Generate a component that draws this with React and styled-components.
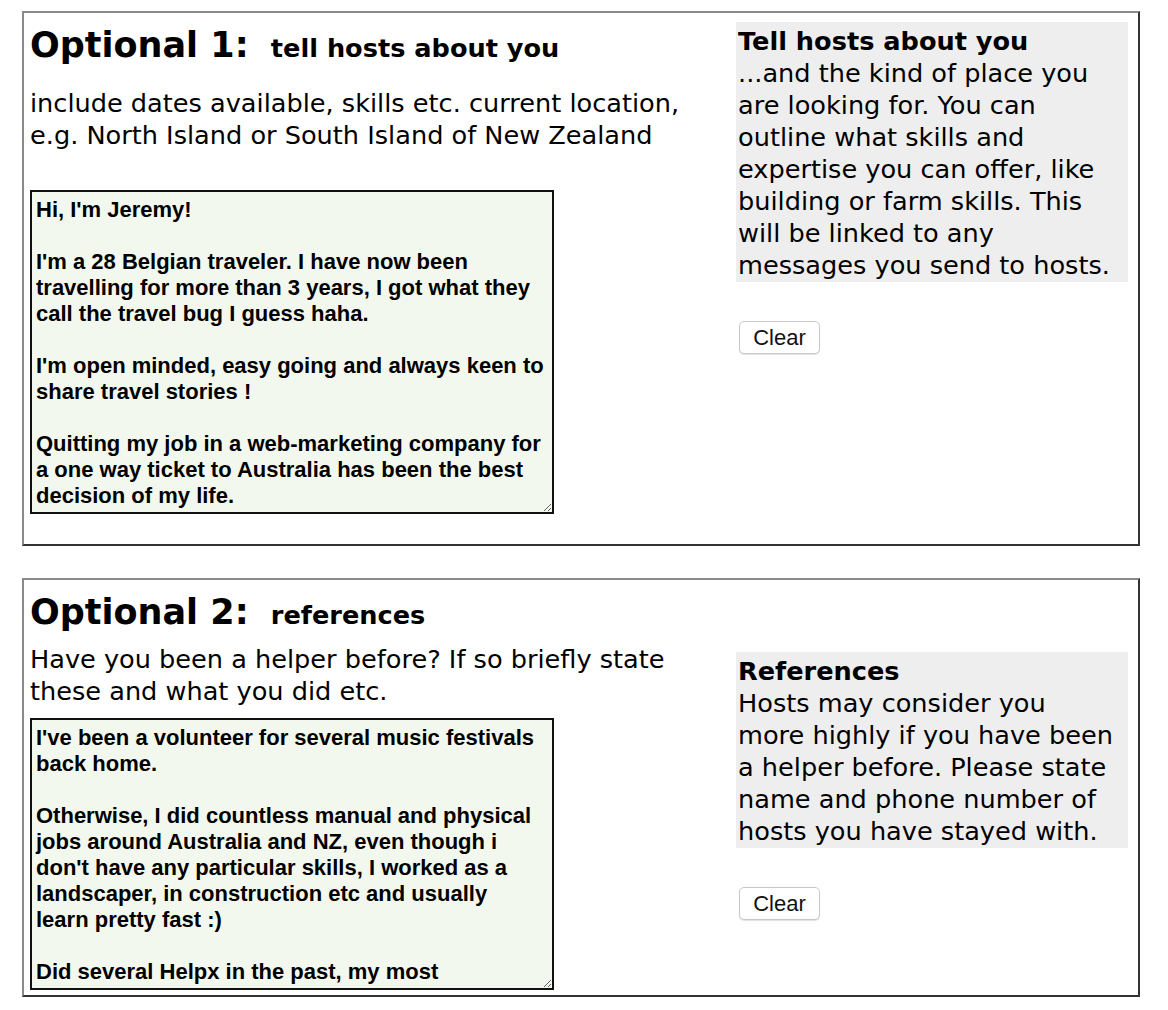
import React from "react";
import styled, {createGlobalStyle} from "styled-components";

const GlobalStyle = createGlobalStyle`
  body {
    margin: 0;
    background: #fff;
    color: #000;
    font-family: "DejaVu Sans", Verdana, sans-serif;
  }
`;

const Page = styled.div`
  display: flex;
  flex-direction: column;
  gap: 32px;
  padding: 11px 28px 13px 22px;
`;

const Section = styled.div`
  display: grid;
  grid-template-columns: 690px 392px;
  column-gap: 16px;
  align-items: start;
  border: 2px solid;
  border-color: #8a8a8a #333 #333 #8a8a8a;
  padding: 9px 10px ${p => p.$bottom}px 6px;
`;

const Main = styled.div`
  display: flex;
  flex-direction: column;
`;

const Title = styled.h2`
  margin: 2px 0 0;
  font-size: 35px;
  line-height: 42px;
  font-weight: bold;
`;

const TitleSub = styled.span`
  margin-left: 10px;
  font-size: 25.6px;
`;

const Hint = styled.p`
  margin: ${p => p.$top}px 0 ${p => p.$bottom}px;
  font-size: 25.6px;
  line-height: 32px;
`;

const Notes = styled.textarea`
  box-sizing: border-box;
  width: 524px;
  height: ${p => p.$height}px;
  margin: 0;
  padding: 5px 7px 5px 4px;
  border: 2px solid #111;
  border-radius: 0;
  background: #f3f8ee;
  color: #000;
  font-family: "Liberation Sans", Arial, sans-serif;
  font-size: 22px;
  font-weight: bold;
  line-height: 26px;
  overflow: hidden;
  outline: none;
`;

const Aside = styled.div`
  display: flex;
  flex-direction: column;
  align-items: flex-start;
  padding-top: ${p => p.$offset}px;
`;

const Tip = styled.div`
  box-sizing: border-box;
  width: 100%;
  padding: 3px 2px 1px;
  background: #eee;
  font-size: 25.6px;
  line-height: 32px;
`;

const TipTitle = styled.div`
  font-weight: bold;
`;

const ClearButton = styled.button`
  margin: 39px 0 0 3px;
  width: 81px;
  height: 33px;
  padding: 0;
  border: 1px solid #c9c9c9;
  border-radius: 5px;
  background: #fff;
  box-shadow: 0 1px 1px rgba(0, 0, 0, 0.12);
  color: #111;
  font-family: "Liberation Sans", Arial, sans-serif;
  font-size: 22px;
`;

const about = `Hi, I'm Jeremy!

I'm a 28 Belgian traveler. I have now been travelling for more than 3 years, I got what they call the travel bug I guess haha.

I'm open minded, easy going and always keen to share travel stories !

Quitting my job in a web-marketing company for a one way ticket to Australia has been the best decision of my life.`;

const refs = `I've been a volunteer for several music festivals back home.

Otherwise, I did countless manual and physical jobs around Australia and NZ, even though i don't have any particular skills, I worked as a landscaper, in construction etc and usually learn pretty fast :)

Did several Helpx in the past, my most`;

export default function App() {
    return <>
        <GlobalStyle/>
        <Page>
            <Section $bottom={30}>
                <Main>
                    <Title>Optional 1: <TitleSub>tell hosts about you</TitleSub></Title>
                    <Hint $top={18} $bottom={39}>
                        include dates available, skills etc. current location, e.g. North Island or South Island of New Zealand
                    </Hint>
                    <Notes $height={324} defaultValue={about} spellCheck={false}/>
                </Main>
                <Aside $offset={0}>
                    <Tip>
                        <TipTitle>Tell hosts about you</TipTitle>
                        ...and the kind of place you are looking for. You can outline what skills and expertise you can offer, like building or farm skills. This will be linked to any messages you send to hosts.
                    </Tip>
                    <ClearButton type="button">Clear</ClearButton>
                </Aside>
            </Section>

            <Section $bottom={5}>
                <Main>
                    <Title>Optional 2: <TitleSub>references</TitleSub></Title>
                    <Hint $top={7} $bottom={11}>
                        Have you been a helper before? If so briefly state these and what you did etc.
                    </Hint>
                    <Notes $height={272} defaultValue={refs} spellCheck={false}/>
                </Main>
                <Aside $offset={63}>
                    <Tip>
                        <TipTitle>References</TipTitle>
                        Hosts may consider you<br/>
                        more highly if you have been a helper before. Please state name and phone number of hosts you have stayed with.
                    </Tip>
                    <ClearButton type="button">Clear</ClearButton>
                </Aside>
            </Section>
        </Page>
    </>;
}
